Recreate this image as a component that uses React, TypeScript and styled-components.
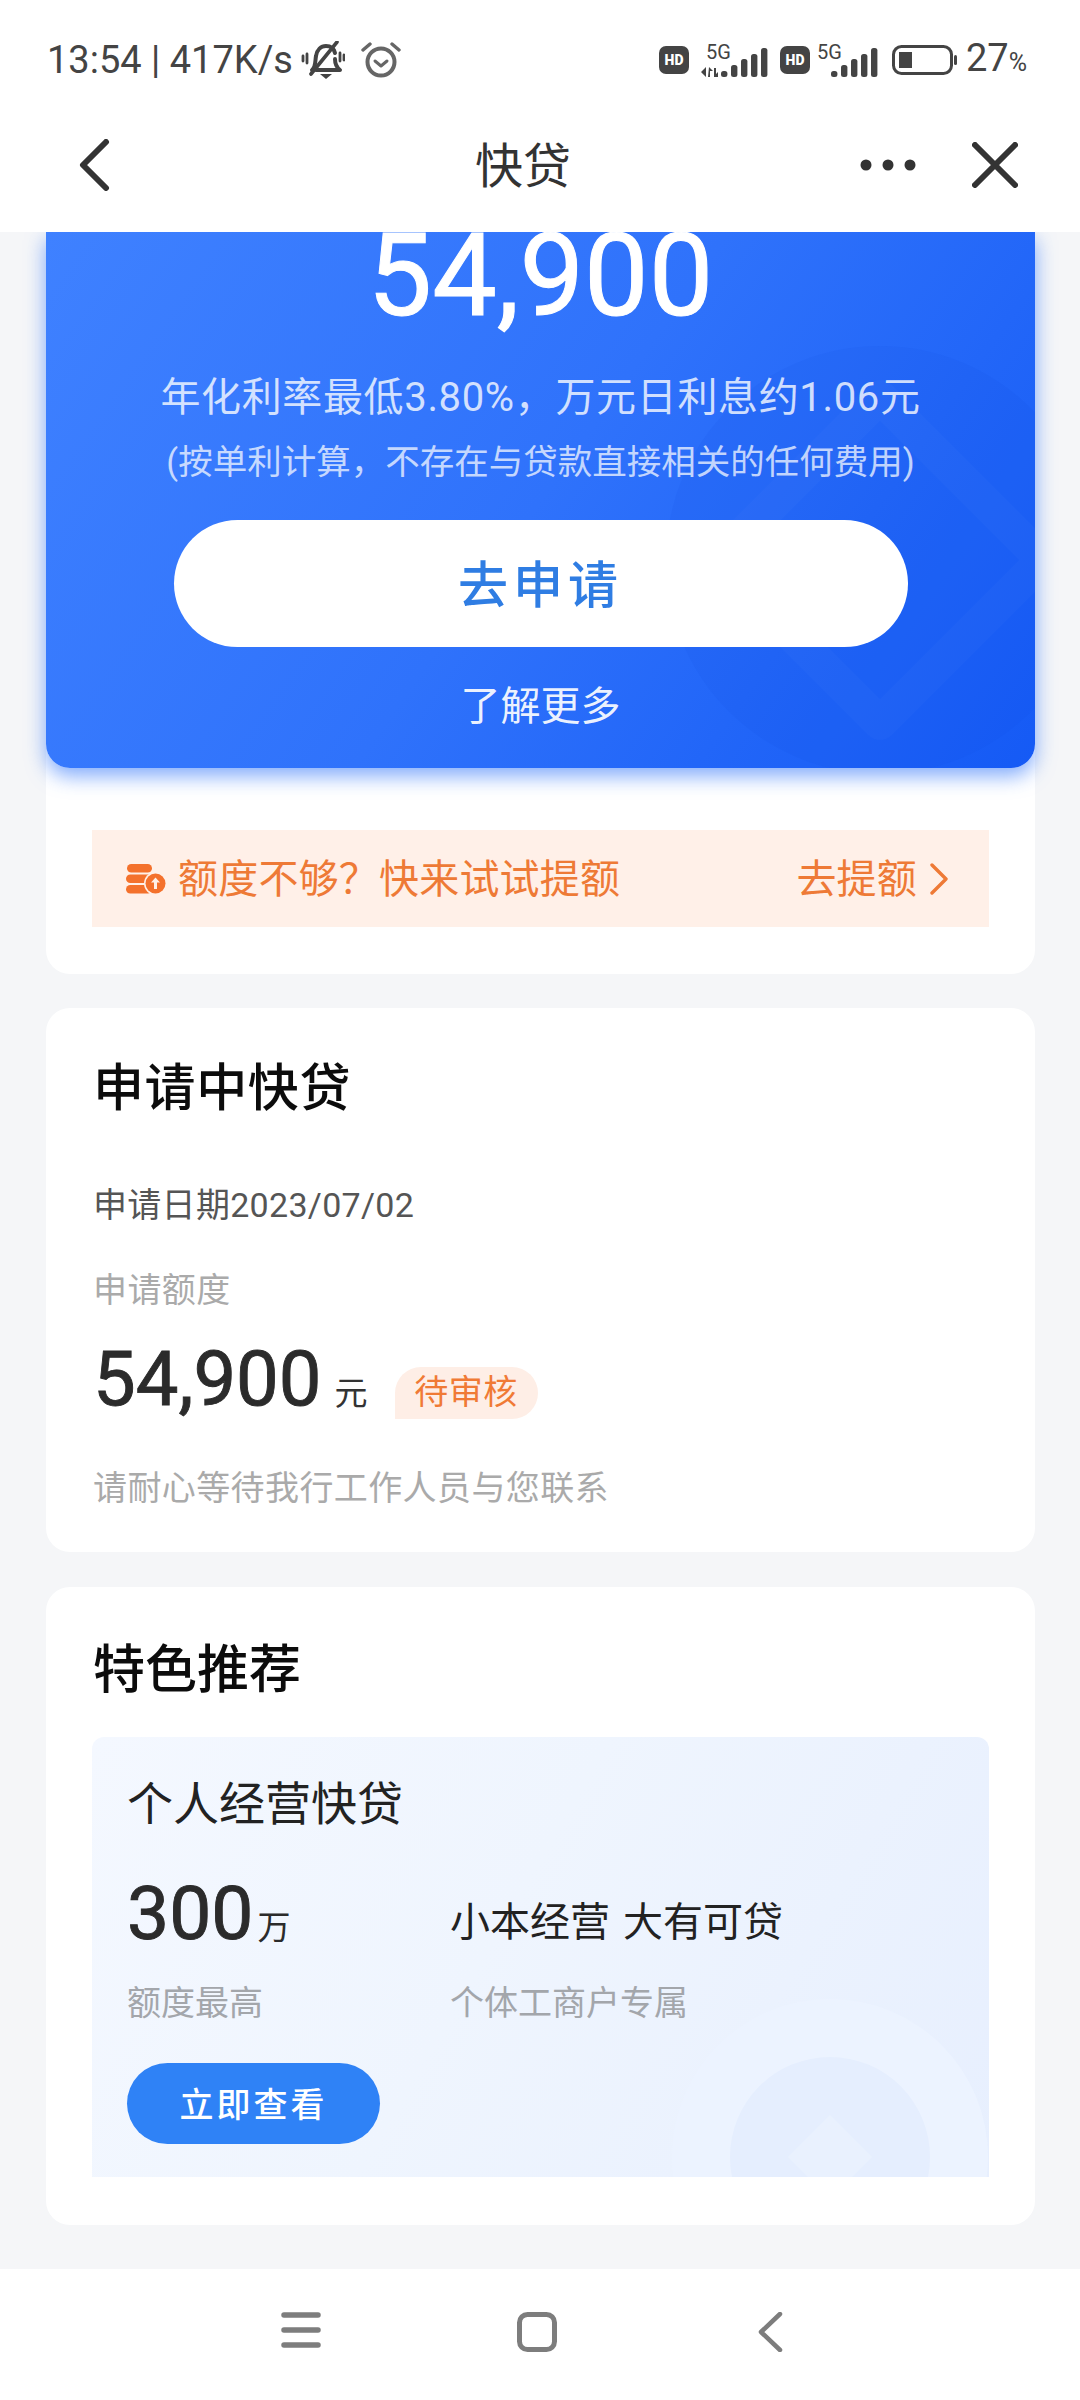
import React from "react";
import styled, { createGlobalStyle } from "styled-components";

const CJK = `Roboto, "Noto Sans CJK SC", sans-serif`;

const Global = createGlobalStyle`
  html, body { margin: 0; padding: 0; background: #f5f6f8; }
  * { box-sizing: border-box; }
  body { font-family: ${CJK}; }
`;

const Phone = styled.div`
  width: 1080px; height: 2400px; display: flex; flex-direction: column; overflow: hidden; background: #f5f6f8;
`;
const TopBar = styled.header`
  background: #fff; height: 232px; flex: none; display: flex; flex-direction: column;
`;
const StatusBar = styled.div`
  height: 115px; padding: 5px 53px 0 47px; display: flex; align-items: center; justify-content: space-between; color: #444;
`;
const StatusGroup = styled.div`
  display: flex; align-items: center;
`;
const StatusText = styled.span`
  font-size: 38px; line-height: 44px; white-space: nowrap;
`;
const BatteryLevel = styled(StatusText)`
  margin-left: 9px;
`;
const Percent = styled.span`
  font-size: 25px;
`;
const NavBar = styled.nav`
  height: 117px; padding: 0 62px 18px 76px; display: grid; grid-template-columns: 399px auto 1fr; align-items: center;
`;
const NavTitle = styled.h1`
  margin: 0 0 6px; font-size: 48px; font-weight: 400; color: #333;
`;
const NavActions = styled.div`
  display: flex; justify-content: flex-end; align-items: center; gap: 56px;
`;
const Content = styled.main`
  flex: 1; min-height: 0; overflow: hidden; padding: 0 45px 0 46px; display: flex; flex-direction: column;
`;
const Card = styled.section`
  background: #fff; border-radius: 24px; margin-bottom: 34px; flex: none;
`;
const HeroWrap = styled(Card)`
  height: 742px;
`;
const Hero = styled.div`
  position: relative; height: 536px; border-radius: 0 0 24px 24px; overflow: hidden; color: #fff;
  background: linear-gradient(125deg, #3f81ff 0%, #2f72fb 50%, #155af5 100%);
  display: flex; flex-direction: column; align-items: center;
`;
const HeroShadow = styled.div`
  border-radius: 0 0 24px 24px; box-shadow: 0 8px 20px rgba(45,115,250,.6);
`;
const Watermark = styled.svg`
  position: absolute; inset: 0; width: 100%; height: 100%;
`;
const HeroAmount = styled.div`
  position: relative; margin-top: -21px; font-size: 115px; line-height: 130px; -webkit-text-stroke: 1px #fff;
`;
const HeroRate = styled.p`
  position: relative; margin: 29px 0 0; font-size: 40px; line-height: 56px; letter-spacing: 0.65px; color: rgba(255,255,255,.78); white-space: nowrap;
`;
const HeroNote = styled.p`
  position: relative; margin: 11px 0 0; font-size: 34.5px; line-height: 50px; color: rgba(255,255,255,.72); white-space: nowrap;
`;
const ApplyButton = styled.button`
  position: relative; margin: 33px 0 0; width: 734px; height: 127px; border: 0; border-radius: 64px; background: #fff; color: #2f7de3;
  font: 500 50px ${CJK}; letter-spacing: 5px; padding: 0 0 6px;
`;
const LearnMore = styled.div`
  position: relative; margin-top: 32px; font-size: 40px; line-height: 56px; color: rgba(255,255,255,.92);
`;
const QuotaBanner = styled.div`
  margin: 62px 46px 0; height: 97px; background: #fff0e8; color: #ee7a36; display: flex; align-items: center; justify-content: space-between;
  padding: 0 40px 0 34px; font-size: 40px;
`;
const BannerSide = styled.div`
  display: flex; align-items: center; gap: 12px; white-space: nowrap;
`;
const BannerText = styled.span`
  margin-bottom: 6px; letter-spacing: 0.2px;
`;
const ApplyCard = styled(Card)`
  height: 544px; margin-bottom: 35px; padding: 48px 47px 0;
`;
const CardTitle = styled.h2`
  margin: 0; font-size: 51px; line-height: 66px; font-weight: 500; letter-spacing: 0.6px; color: #0c0c0c; white-space: nowrap;
`;
const DateLine = styled.div`
  margin-top: 59px; font-size: 34px; line-height: 48px; letter-spacing: 0.3px; color: #555;
`;
const MutedLine = styled.div`
  margin-top: ${(p: { $top?: number }) => p.$top ?? 0}px; font-size: 34px; line-height: 48px; letter-spacing: 0.4px; color: #aaaaaa; white-space: nowrap;
`;
const AmountRow = styled.div`
  display: flex; align-items: center; margin-top: 20px; height: 90px;
`;
const Amount = styled.span`
  font-size: 76px; line-height: 90px; color: #2b2b2b; -webkit-text-stroke: 0.9px #2b2b2b;
`;
const AmountUnit = styled.span`
  margin: 23px 0 0 13px; font-size: 33px; color: #333;
`;
const StatusBadge = styled.span`
  margin: 28px 0 0 27px; width: 143px; height: 52px; background: #feeee6; border-radius: 26px 26px 26px 0; color: #f07a35;
  font-size: 34px; line-height: 50px; text-align: center; letter-spacing: 0.5px;
`;
const FeatureCard = styled(Card)`
  height: 638px; margin-bottom: 0; padding: 51px 46px 0;
`;
const FeatureTitle = styled(CardTitle)`
  margin: 0 0 0 1px; font-size: 52px; letter-spacing: 0;
`;
const FeatureBox = styled.div`
  position: relative; height: 440px; margin-top: 33px; padding: 39px 36px 0 35px; overflow: hidden; border-radius: 12px 12px 0 0;
  background: linear-gradient(120deg, #f4f8ff 0%, #eff5fe 45%, #e7effe 100%);
`;
const CoinArt = styled.svg`
  position: absolute; inset: 0; width: 100%; height: 100%;
`;
const FeatureName = styled.div`
  position: relative; font-size: 46px; line-height: 56px; color: #222; white-space: nowrap;
`;
const FeatureGrid = styled.div`
  position: relative; display: grid; grid-template-columns: 323px 1fr; margin-top: 36px;
`;
const FeatureFigure = styled.div`
  height: 90px; display: flex; align-items: baseline; color: #2b2b2b; font-size: 75px; line-height: 90px; -webkit-text-stroke: 0.9px #2b2b2b;
`;
const FigureUnit = styled.span`
  font-size: 33px; font-weight: 400; margin-left: 4px; -webkit-text-stroke: 0;
`;
const Slogan = styled.div`
  height: 90px; padding-top: 24px; font-size: 40px; line-height: 62px; word-spacing: 3px; color: #222; white-space: nowrap;
`;
const FeatureNote = styled.div`
  margin-top: 21px; font-size: 34px; line-height: 48px; color: #a3a6ab; white-space: nowrap;
`;
const ViewButton = styled.button`
  position: relative; display: block; margin: 36px 0 0 0; width: 253px; height: 81px; border: 0; border-radius: 41px; background: #2f82f6; color: #fff;
  font: 500 34px ${CJK}; letter-spacing: 3px; padding: 0 0 2px;
`;
const BottomNav = styled.footer`
  flex: none; height: 131px; background: #fff; display: flex; align-items: flex-start; justify-content: center; gap: 196px; padding: 43px 16px 0 0;
`;
const NavIcon = styled.svg`
  display: block; flex: none;
`;
const BackKey = styled(NavIcon)`
  margin-left: 4px;
`;
const BellIcon = styled(NavIcon)`
  margin-left: 8px;
`;
const AlarmIcon = styled(NavIcon)`
  margin-left: 16px;
`;
const HdIcon = styled(NavIcon)`
  margin-left: ${(p: { $left?: number }) => p.$left ?? 0}px;
`;
const SignalIcon = styled(NavIcon)`
  margin-left: ${(p: { $left?: number }) => p.$left ?? 0}px;
`;
const BatteryIcon = styled(NavIcon)`
  margin-left: 13px;
`;

const Back = () => (
  <NavIcon width="36" height="52" viewBox="0 0 36 52">
    <path d="M30 3 7 26l23 23" fill="none" stroke="#333" strokeWidth="6" strokeLinecap="round" strokeLinejoin="round" />
  </NavIcon>
);
const Dots = () => (
  <NavIcon width="56" height="12" viewBox="0 0 56 12">
    <circle cx="6" cy="6" r="5.5" fill="#333" /><circle cx="28" cy="6" r="5.5" fill="#333" /><circle cx="50" cy="6" r="5.5" fill="#333" />
  </NavIcon>
);
const Close = () => (
  <NavIcon width="46" height="46" viewBox="0 0 46 46">
    <path d="M3 3l40 40M43 3 3 43" fill="none" stroke="#333" strokeWidth="6" strokeLinecap="round" />
  </NavIcon>
);
const MutedBell = () => (
  <BellIcon width="44" height="38" viewBox="0 0 44 38">
    <g fill="none" stroke="#444" strokeLinecap="round" strokeLinejoin="round">
      <path d="M11 29c4-3 3-9 4-14 1-6 5-10 10-10s8 3 9 7M34 18c0 4 1 8 5 11H15" strokeWidth="4" />
      <path d="M36 1 10 33" strokeWidth="3.6" />
      <path d="M6 13v9M2 15v5M39 12v8M43 14v5" strokeWidth="2.8" />
    </g>
    <path d="M19 33h12l-6 5z" fill="#444" />
  </BellIcon>
);
const Alarm = () => (
  <AlarmIcon width="40" height="36" viewBox="0 0 40 36">
    <g fill="none" stroke="#666" strokeLinecap="round" strokeLinejoin="round">
      <circle cx="20" cy="20" r="13.500" strokeWidth="4" />
      <path d="M14 19l6 5 6-5" strokeWidth="3" />
      <path d="M2 8 9 2M38 8l-7-6" strokeWidth="3.4" />
    </g>
  </AlarmIcon>
);
const Hd = ({ left }: { left?: number }) => (
  <HdIcon $left={left} width="30" height="28" viewBox="0 0 30 28">
    <rect width="30" height="28" rx="7" fill="#444" />
    <text x="15" y="19" textAnchor="middle" fontFamily="Roboto, sans-serif" fontWeight="900" fontSize="14" fill="#fff">HD</text>
  </HdIcon>
);
const BAR_TOPS = [28, 22, 16, 11, 5];
const Signal = ({ arrows, left }: { arrows?: boolean; left?: number }) => {
  const start = arrows ? 20 : 14;
  return (
    <SignalIcon $left={left} width={arrows ? 67 : 62} height="34" viewBox={`0 0 ${arrows ? 67 : 62} 34`}>
      <text x={arrows ? 5 : 0} y="16" fontFamily="Roboto, sans-serif" fontSize="20" fill="#444">5G</text>
      {arrows && <path d="M0 29l5-5v10zM8 24l4 4H9v6H7zM13 25h2v6l2-2v5h-4z" fill="#444" />}
      {BAR_TOPS.map((top, i) => (
        <rect key={top} x={start + i * 10} y={top} width="6.400" height={34 - top} rx="2.500" fill="#444" />
      ))}
    </SignalIcon>
  );
};
const Battery = () => (
  <BatteryIcon width="65" height="30" viewBox="0 0 65 30">
    <rect x="1.500" y="1.500" width="58" height="27" rx="8" fill="none" stroke="#444" strokeWidth="3" />
    <path d="M7 7h13v16H7z" fill="#444" />
    <rect x="62" y="10" width="3" height="10" rx="1.500" fill="#444" />
  </BatteryIcon>
);
const CoinStack = () => (
  <NavIcon width="40" height="30" viewBox="0 0 40 30">
    <g fill="#f4712c">
      <rect x="1" y="0" width="25" height="8.500" rx="4.250" />
      <rect x="0" y="10.500" width="26" height="8.500" rx="4.250" />
      <rect x="0" y="21" width="26" height="8.500" rx="4.250" />
    </g>
    <circle cx="29.500" cy="19.500" r="11.500" fill="#fff0e8" />
    <circle cx="29.500" cy="19.500" r="10" fill="#f4712c" />
    <path d="M29.500 13.500l-4.500 5h3v6.500h3v-6.500h3z" fill="#fff0e8" />
  </NavIcon>
);
const Chevron = () => (
  <NavIcon width="20" height="32" viewBox="0 0 20 32">
    <path d="M3 2l14 14L3 30" fill="none" stroke="#ee7a36" strokeWidth="3.400" strokeLinecap="round" strokeLinejoin="round" />
  </NavIcon>
);

export default function App() {
  return (
    <Phone>
      <Global />
      <TopBar>
        <StatusBar>
          <StatusGroup>
            <StatusText>13:54 | 417K/s</StatusText>
            <MutedBell />
            <Alarm />
          </StatusGroup>
          <StatusGroup>
            <Hd />
            <Signal arrows left={12} />
            <Hd left={12} />
            <Signal left={7} />
            <Battery />
            <BatteryLevel>27<Percent>%</Percent></BatteryLevel>
          </StatusGroup>
        </StatusBar>
        <NavBar>
          <Back />
          <NavTitle>快贷</NavTitle>
          <NavActions><Dots /><Close /></NavActions>
        </NavBar>
      </TopBar>
      <Content>
        <HeroWrap>
          <HeroShadow>
            <Hero>
              <Watermark viewBox="0 0 989 536">
                <circle cx="834" cy="328" r="214" fill="#104fe6" fillOpacity=".1" />
                <path d="M834 165 997 328 834 491 671 328z" fill="none" stroke="#fff" strokeOpacity=".018" strokeWidth="34" strokeLinejoin="round" />
              </Watermark>
              <HeroAmount>54,900</HeroAmount>
              <HeroRate>年化利率最低3.80%，万元日利息约1.06元</HeroRate>
              <HeroNote>(按单利计算，不存在与贷款直接相关的任何费用)</HeroNote>
              <ApplyButton>去申请</ApplyButton>
              <LearnMore>了解更多</LearnMore>
            </Hero>
          </HeroShadow>
          <QuotaBanner>
            <BannerSide>
              <CoinStack />
              <BannerText>额度不够？快来试试提额</BannerText>
            </BannerSide>
            <BannerSide><BannerText>去提额</BannerText><Chevron /></BannerSide>
          </QuotaBanner>
        </HeroWrap>
        <ApplyCard>
          <CardTitle>申请中快贷</CardTitle>
          <DateLine>申请日期2023/07/02</DateLine>
          <MutedLine $top={37}>申请额度</MutedLine>
          <AmountRow>
            <Amount>54,900</Amount>
            <AmountUnit>元</AmountUnit>
            <StatusBadge>待审核</StatusBadge>
          </AmountRow>
          <MutedLine $top={40}>请耐心等待我行工作人员与您联系</MutedLine>
        </ApplyCard>
        <FeatureCard>
          <FeatureTitle>特色推荐</FeatureTitle>
          <FeatureBox>
            <CoinArt viewBox="0 0 897 440">
              <circle cx="738" cy="420" r="158" fill="#ecf3ff" />
              <circle cx="738" cy="420" r="100" fill="#e5eefe" />
              <path d="M738 378l42 42-42 42-42-42z" fill="#e9f1fe" />
            </CoinArt>
            <FeatureName>个人经营快贷</FeatureName>
            <FeatureGrid>
              <div>
                <FeatureFigure>300<FigureUnit>万</FigureUnit></FeatureFigure>
                <FeatureNote>额度最高</FeatureNote>
              </div>
              <div>
                <Slogan>小本经营 大有可贷</Slogan>
                <FeatureNote>个体工商户专属</FeatureNote>
              </div>
            </FeatureGrid>
            <ViewButton>立即查看</ViewButton>
          </FeatureBox>
        </FeatureCard>
      </Content>
      <BottomNav>
        <NavIcon width="40" height="36" viewBox="0 0 40 36">
          <path d="M3 3h34M3 18h34M3 33h34" stroke="#7d7d7d" strokeWidth="5.500" strokeLinecap="round" />
        </NavIcon>
        <NavIcon width="40" height="40" viewBox="0 0 40 40">
          <rect x="2.500" y="2.500" width="35" height="35" rx="8" fill="none" stroke="#7d7d7d" strokeWidth="5" />
        </NavIcon>
        <BackKey width="26" height="40" viewBox="0 0 26 40">
          <path d="M23 2 4 20l19 18" fill="none" stroke="#7d7d7d" strokeWidth="4.500" strokeLinecap="round" strokeLinejoin="round" />
        </BackKey>
      </BottomNav>
    </Phone>
  );
}
